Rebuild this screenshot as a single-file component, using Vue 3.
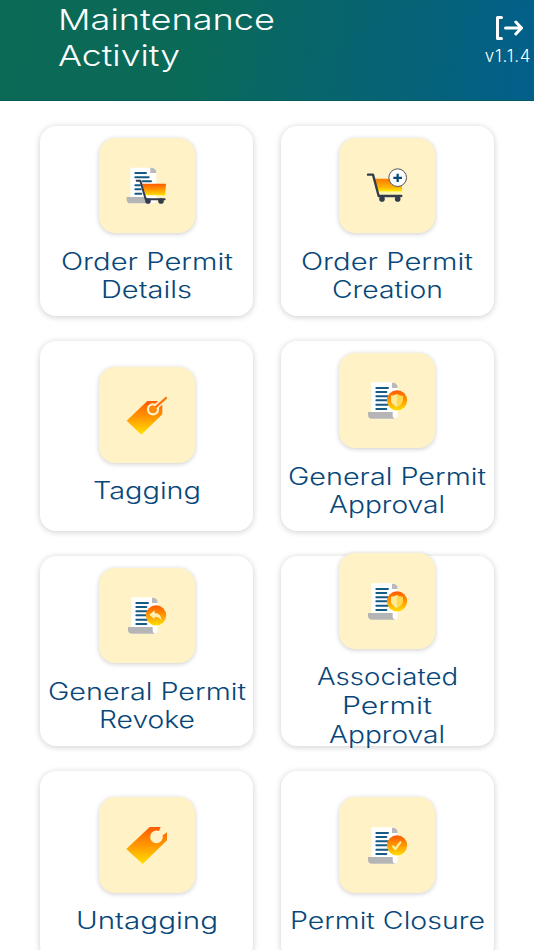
<template>
  <div class="page">
    <header class="top-bar">
      <h1 class="title">
        <svg v-for="line in title" :key="line.text" class="title-line" :width="line.width" height="36.3">
          <text x="0" y="26" :textLength="line.width" lengthAdjust="spacingAndGlyphs">{{ line.text }}</text>
        </svg>
      </h1>
      <div class="logout">
        <svg class="logout-icon" width="28" height="26" viewBox="0 0 28 26" fill="none" stroke="#fff" stroke-width="3">
          <path d="M6.500 2.500H2.500V23.500H6.500" stroke-linejoin="round" stroke-linecap="round" />
          <path d="M10.500 13H26M20.800 7L26.500 13L20.800 19" stroke-linejoin="round" stroke-linecap="round" />
        </svg>
        <span class="version">v1.1.4</span>
      </div>
    </header>

    <!-- gradients shared by all tile icons -->
    <svg class="defs" width="0" height="0">
      <defs>
        <linearGradient id="flame" x1="0" y1="0" x2="0" y2="1">
          <stop offset="0" stop-color="#ff5a00" />
          <stop offset="0.5" stop-color="#ff9800" />
          <stop offset="1" stop-color="#ffdf00" />
        </linearGradient>
        <linearGradient id="flameFade" x1="0" y1="0" x2="0" y2="1">
          <stop offset="0" stop-color="#ff7a00" />
          <stop offset="0.55" stop-color="#ffb400" />
          <stop offset="0.78" stop-color="#ffe600" />
          <stop offset="0.84" stop-color="#fff5b0" />
          <stop offset="1" stop-color="#fff5b0" />
        </linearGradient>
      </defs>
    </svg>

    <main class="grid">
      <div v-for="item in items" :key="item.id" class="card">
        <div class="tile">
          <svg width="75" height="70" viewBox="0 0 225 210">
            <g v-if="item.doc">
              <path d="M64 52H127L143 68V150Q143 161 132 161H64Z" fill="#fff" />
              <path d="M126 53Q143 53 143 69H126Z" fill="#b8b8bd" />
              <path d="M54 141H128V151Q128 161 137 161H66Q54 161 54 149Z" fill="#b5b5b5" />
              <path
                d="M79 69H114M79 81H109M79 93.500H114M79 106H114M79 119H114M79 132H109"
                stroke="#145a86" stroke-width="6" stroke-linecap="round"
              />
            </g>

            <g v-if="item.icon === 'docCart'">
              <path d="M61 53H123L139 69V150Q139 160 129 160H61Z" fill="#fff" />
              <path d="M121 53Q139 53 139 69H121Z" fill="#b8b8bd" />
              <path d="M50 141H110V160H62Q50 160 50 149Z" fill="#b5b5b5" />
              <path
                d="M76 69H108M76 81.500H116M98 94H123M76 106H90M76 118H92M76 131H94"
                stroke="#145a86" stroke-width="6" stroke-linecap="round"
              />
              <path d="M96 101H168L165 136H106Z" fill="url(#flame)" />
              <path d="M80 92H91L107 148H164" fill="none" stroke="#343c4b" stroke-width="6" stroke-linejoin="round" stroke-linecap="round" />
              <circle cx="114" cy="153" r="8.500" fill="#343c4b" />
              <circle cx="153" cy="153" r="8.500" fill="#343c4b" />
            </g>

            <g v-else-if="item.icon === 'cartPlus'">
              <path d="M74 86H156V133H86Z" fill="url(#flameFade)" />
              <path d="M54 74H69L86 138H154" fill="none" stroke="#343c4b" stroke-width="7" stroke-linejoin="round" stroke-linecap="round" />
              <circle cx="96" cy="147" r="8.500" fill="#343c4b" />
              <circle cx="143" cy="147" r="8.500" fill="#343c4b" />
              <circle cx="143" cy="83" r="26.500" fill="#fff" stroke="#505560" stroke-width="3" />
              <path d="M143 71V96M130 83.500H156" stroke="#0b4c7a" stroke-width="7" />
            </g>

            <g v-else-if="item.icon === 'tag'">
              <path d="M50 122L112 63H141L157 76V103L96 162Q94 163 91 161Z" fill="url(#flame)" />
              <circle cx="129" cy="88" r="15" fill="none" stroke="#fff2c6" stroke-width="7" />
              <path d="M136 82L170 51" stroke="#fff2c6" stroke-width="16" />
              <path d="M132 86L168 54" stroke="#ff7208" stroke-width="7" stroke-linecap="round" />
              <circle cx="129" cy="89" r="10" fill="#ff8a08" />
            </g>

            <g v-else-if="item.icon === 'untag'">
              <path d="M49 117L119 51H152L147 63A19 19 0 1 0 158 76L171 67V91L98 162Z" fill="url(#flame)" />
            </g>

            <g v-else>
              <circle :cx="item.icon === 'revoke' ? 138 : 141" cy="106" r="30.500" fill="url(#flame)" />
              <template v-if="item.icon === 'shield'">
                <path d="M141 87Q149 93 159 92V105Q158 119 141 126Q124 119 123 105V92Q133 93 141 87Z" fill="#ffd84d" />
                <path d="M141 87Q133 93 123 92V105Q124 119 141 126Z" fill="#ffe993" />
              </template>
              <path v-else-if="item.icon === 'revoke'" d="M118 104L134 91V99Q154 100 154 121Q147 110 134 110V118Z" fill="#fff0b0" />
              <path v-else d="M129 109L136 117L151 97" fill="none" stroke="#ffef9f" stroke-width="6.500" stroke-linecap="round" stroke-linejoin="round" />
            </g>
          </svg>
        </div>
        <div class="label">
          <svg v-for="line in item.lines" :key="line[0]" class="label-line" :width="line[1]" height="28.7">
            <text x="0" y="21.5" :textLength="line[1]" lengthAdjust="spacingAndGlyphs">{{ line[0] }}</text>
          </svg>
        </div>
      </div>
    </main>
  </div>
</template>

<script setup>
const title = [
  { text: 'Maintenance', width: 217 },
  { text: 'Activity', width: 122 },
]

// each label line: [text, drawn width]
const items = [
  { id: 1, icon: 'docCart', lines: [['Order Permit', 172], ['Details', 91]] },
  { id: 2, icon: 'cartPlus', lines: [['Order Permit', 172], ['Creation', 111]] },
  { id: 3, icon: 'tag', lines: [['Tagging', 108]] },
  { id: 4, icon: 'shield', doc: true, lines: [['General Permit', 198], ['Approval', 116]] },
  { id: 5, icon: 'revoke', doc: true, lines: [['General Permit', 198], ['Revoke', 96]] },
  { id: 6, icon: 'shield', doc: true, lines: [['Associated', 141], ['Permit', 90], ['Approval', 116]] },
  { id: 7, icon: 'untag', lines: [['Untagging', 142]] },
  { id: 8, icon: 'check', doc: true, lines: [['Permit Closure', 195]] },
]
</script>

<style>
body {
  margin: 0;
  background: #fff;
}
</style>

<style scoped>
.page {
  width: 534px;
  height: 950px;
  overflow: hidden;
  background: #fff;
  font-family: Inter, "Open Sans", sans-serif;
}

.top-bar {
  display: flex;
  justify-content: space-between;
  box-sizing: border-box;
  height: 101px;
  padding: 4px 2px 0 58px;
  background: linear-gradient(100deg, #0a6a56 0%, #0a6a58 37%, #07656c 60%, #05627a 80%, #02608a 97%);
  border-bottom: 1px solid #085b5c;
}
.title {
  display: flex;
  flex-direction: column;
  margin: 0;
}
.title-line {
  display: block;
  overflow: visible;
  font-size: 29px;
  font-weight: 300;
  fill: #fff;
}

.logout {
  display: flex;
  flex-direction: column;
  align-items: center;
  width: 48px;
  padding-top: 11px;
}
.logout-icon {
  margin-left: 1px;
}
.version {
  margin-top: 4px;
  font-size: 17px;
  font-weight: 350;
  line-height: 22px;
  letter-spacing: 0.8px;
  color: #fff;
}

.defs { display: block; }

.grid {
  display: grid;
  grid-template-columns: 213.4px 213.4px;
  grid-auto-rows: 190px;
  gap: 25px 27.2px;
  padding: 25.3px 0 0 40px;
}
.card {
  display: flex;
  flex-direction: column;
  align-items: center;
  justify-content: center;
  background: #fff;
  border-radius: 16px;
  box-shadow: 0 1px 6px rgba(0, 0, 0, 0.2);
}
.tile {
  display: flex;
  flex: none;
  align-items: center;
  justify-content: center;
  width: 96.4px;
  height: 95.5px;
  background: #fff2c6;
  border-radius: 16px;
  box-shadow: 0 1px 5px rgba(0, 0, 0, 0.2);
}
.tile svg {
  margin-left: 1px;
}
.label {
  display: flex;
  flex: none;
  flex-direction: column;
  align-items: center;
  margin-top: 14.4px;
}
.label-line {
  display: block;
  overflow: visible;
  font-size: 23.5px;
  font-weight: 350;
  fill: #08477a;
}
</style>
